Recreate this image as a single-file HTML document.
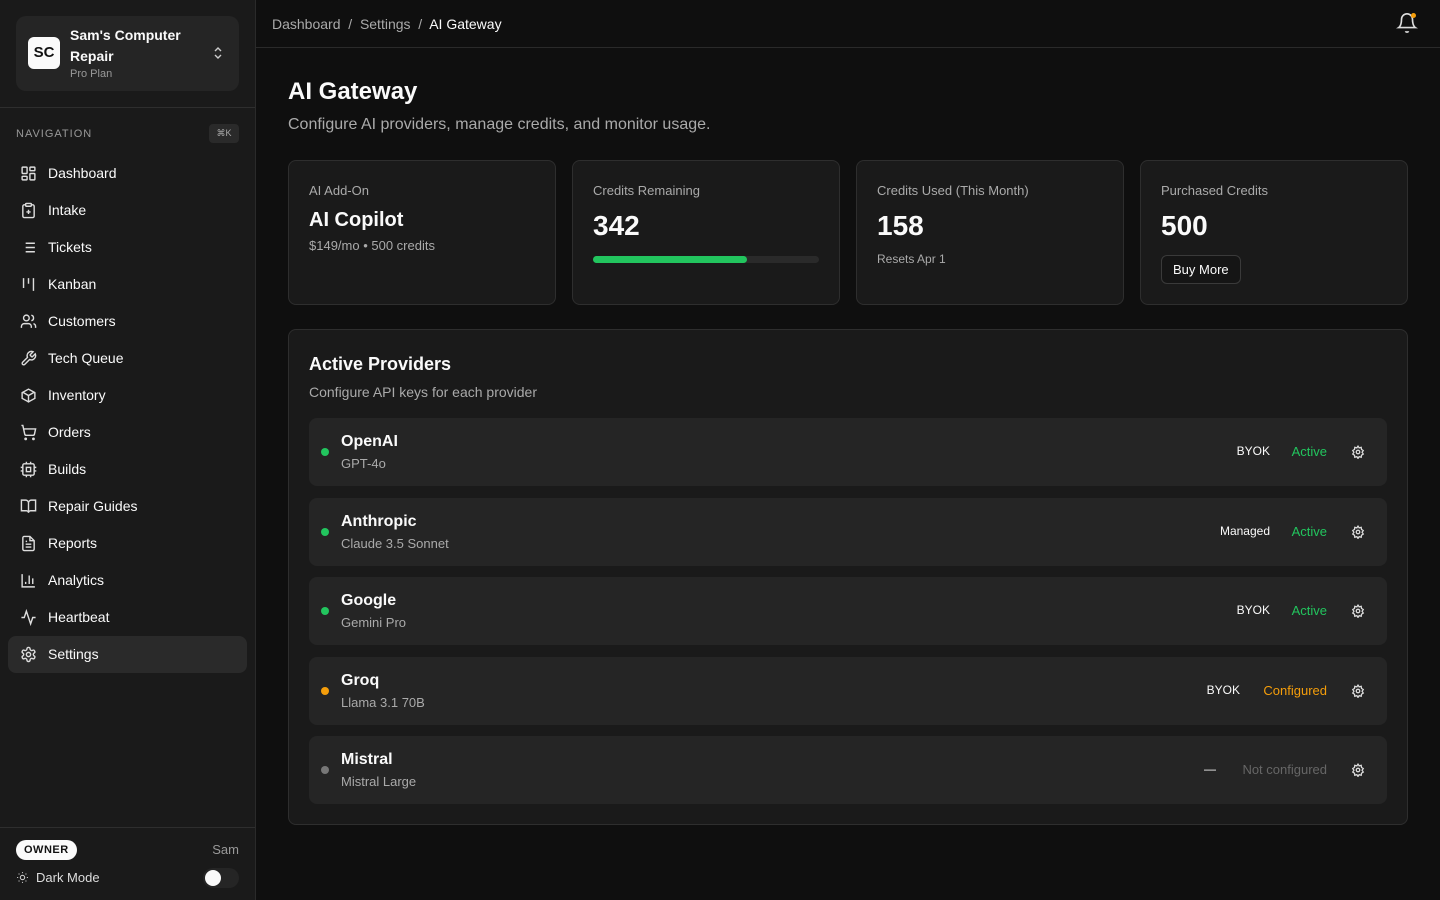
<!DOCTYPE html>
<html><head><meta charset="utf-8"><style>
*{box-sizing:border-box;margin:0;padding:0}
body{width:1440px;height:900px;background:#0f0f0f;font-family:"Liberation Sans",sans-serif;color:#fafafa;position:relative;overflow:hidden}
.sb{position:absolute;left:0;top:0;width:256px;height:900px;background:#1a1a1a;border-right:1px solid #2a2a2a}
.org{position:absolute;left:16px;top:16px;width:223px;height:75px;background:#252525;border-radius:10px}
.av{position:absolute;left:12px;top:21px;width:32px;height:32px;background:#fafafa;border-radius:6px;color:#111;font-weight:bold;font-size:15px;text-align:center;line-height:32px}
.on{position:absolute;left:54px;top:9px;font-size:14px;font-weight:bold;line-height:21px;width:140px}
.pp{position:absolute;left:54px;top:52px;font-size:11px;color:#999}
.sep{position:absolute;left:0;top:107px;width:255px;border-top:1px solid #2e2e2e}
.navl{position:absolute;left:16px;top:128px;font-size:11px;letter-spacing:1px;color:#999}
.kb{position:absolute;left:209px;top:124px;width:30px;height:19px;background:#2a2a2a;border-radius:4px;font-size:9px;color:#aaa;text-align:center;line-height:19px}
.ni{position:absolute;left:8px;width:239px;height:37px;border-radius:8px;font-size:14px;line-height:37px;padding-left:40px}
.ni svg{position:absolute;left:12px;top:10px}
.act{background:#2a2a2a}
.foot{position:absolute;left:0;top:827px;width:255px;border-top:1px solid #2e2e2e}
.own{position:absolute;left:16px;top:840px;background:#fafafa;color:#111;font-size:11px;font-weight:bold;border-radius:10px;padding:4px 8px;letter-spacing:.5px}
.hdr{position:absolute;left:256px;top:0;right:0;height:48px;border-bottom:1px solid #2a2a2a}
.bc{position:absolute;left:16px;top:16px;font-size:14px;color:#aaa}
.card{position:absolute;top:160px;width:268px;height:145px;background:#1a1a1a;border:1px solid #2e2e2e;border-radius:8px}
.cl{position:absolute;left:20px;top:22px;font-size:13px;color:#aaa}
.cv{position:absolute;left:20px;top:49px;font-size:28px;font-weight:bold}
.prov{position:absolute;left:288px;top:329px;width:1120px;height:496px;background:#1a1a1a;border:1px solid #2e2e2e;border-radius:8px}
.row{position:absolute;left:20px;width:1078px;height:68px;background:#252525;border-radius:8px}
.dot{position:absolute;left:12px;top:30px;width:8px;height:8px;border-radius:50%}
.pn{position:absolute;left:32px;top:15px;font-size:16px;font-weight:bold}
.pm{position:absolute;left:32px;top:38px;font-size:13px;color:#aaa}
.ty{position:absolute;top:26px;font-size:12px;text-align:right}
.st{position:absolute;right:60px;top:26px;font-size:13px}
.g{position:absolute;right:22px;top:27px}
</style></head><body>
<div class="sb">
<div class="org"><div class="av">SC</div><div class="on">Sam's Computer Repair</div><div class="pp">Pro Plan</div>
<svg style="position:absolute;left:197px;top:30px" width="10" height="14" viewBox="0 0 10 14" fill="none" stroke="#ccc" stroke-width="1.4"><path d="M2 5l3-3 3 3M2 9l3 3 3-3"/></svg></div>
<div class="sep"></div>
<div class="navl">NAVIGATION</div><div class="kb">⌘K</div>
<div class="ni" style="top:155px"><svg width="17" height="17" viewBox="0 0 24 24" fill="none" stroke="#ddd" stroke-width="2"><rect x="3" y="3" width="7" height="9" rx="1"/><rect x="14" y="3" width="7" height="5" rx="1"/><rect x="14" y="12" width="7" height="9" rx="1"/><rect x="3" y="16" width="7" height="5" rx="1"/></svg>Dashboard</div>
<div class="ni" style="top:192px"><svg width="17" height="17" viewBox="0 0 24 24" fill="none" stroke="#ddd" stroke-width="2"><rect x="8" y="2" width="8" height="4" rx="1"/><path d="M16 4h2a2 2 0 012 2v14a2 2 0 01-2 2H6a2 2 0 01-2-2V6a2 2 0 012-2h2M12 11v6M9 14h6"/></svg>Intake</div>
<div class="ni" style="top:229px"><svg width="17" height="17" viewBox="0 0 24 24" fill="none" stroke="#ddd" stroke-width="2"><path d="M8 6h13M8 12h13M8 18h13M3 6h.01M3 12h.01M3 18h.01"/></svg>Tickets</div>
<div class="ni" style="top:266px"><svg width="17" height="17" viewBox="0 0 24 24" fill="none" stroke="#ddd" stroke-width="2"><path d="M5 3v14M12 3v8M19 3v18"/></svg>Kanban</div>
<div class="ni" style="top:303px"><svg width="17" height="17" viewBox="0 0 24 24" fill="none" stroke="#ddd" stroke-width="2"><circle cx="9" cy="7" r="4"/><path d="M16 21v-2a4 4 0 00-4-4H6a4 4 0 00-4 4v2M16 3.1a4 4 0 010 7.8M22 21v-2a4 4 0 00-3-3.9"/></svg>Customers</div>
<div class="ni" style="top:340px"><svg width="17" height="17" viewBox="0 0 24 24" fill="none" stroke="#ddd" stroke-width="2"><path d="M14.7 6.3a1 1 0 000 1.4l1.6 1.6a1 1 0 001.4 0l3.8-3.8a6 6 0 01-7.9 7.9l-6.9 6.9a2.1 2.1 0 01-3-3l6.9-6.9a6 6 0 017.9-7.9z"/></svg>Tech Queue</div>
<div class="ni" style="top:377px"><svg width="17" height="17" viewBox="0 0 24 24" fill="none" stroke="#ddd" stroke-width="2"><path d="M21 8l-9-5-9 5v8l9 5 9-5zM3.3 7L12 12l8.7-5M12 22V12"/></svg>Inventory</div>
<div class="ni" style="top:414px"><svg width="17" height="17" viewBox="0 0 24 24" fill="none" stroke="#ddd" stroke-width="2"><circle cx="8" cy="21" r="1"/><circle cx="19" cy="21" r="1"/><path d="M2 2h2l2.7 12.4a2 2 0 002 1.6h9.7a2 2 0 002-1.6L22 7H5.1"/></svg>Orders</div>
<div class="ni" style="top:451px"><svg width="17" height="17" viewBox="0 0 24 24" fill="none" stroke="#ddd" stroke-width="2"><rect x="4" y="4" width="16" height="16" rx="2"/><rect x="9" y="9" width="6" height="6"/><path d="M9 1v3M15 1v3M9 20v3M15 20v3M20 9h3M20 14h3M1 9h3M1 14h3"/></svg>Builds</div>
<div class="ni" style="top:488px"><svg width="17" height="17" viewBox="0 0 24 24" fill="none" stroke="#ddd" stroke-width="2"><path d="M2 3h6a4 4 0 014 4v14a3 3 0 00-3-3H2zM22 3h-6a4 4 0 00-4 4v14a3 3 0 013-3h7z"/></svg>Repair Guides</div>
<div class="ni" style="top:525px"><svg width="17" height="17" viewBox="0 0 24 24" fill="none" stroke="#ddd" stroke-width="2"><path d="M14 2H6a2 2 0 00-2 2v16a2 2 0 002 2h12a2 2 0 002-2V8zM14 2v6h6M16 13H8M16 17H8M10 9H8"/></svg>Reports</div>
<div class="ni" style="top:562px"><svg width="17" height="17" viewBox="0 0 24 24" fill="none" stroke="#ddd" stroke-width="2"><path d="M3 3v18h18M18 17V9M13 17V5M8 17v-3"/></svg>Analytics</div>
<div class="ni" style="top:599px"><svg width="17" height="17" viewBox="0 0 24 24" fill="none" stroke="#ddd" stroke-width="2"><path d="M22 12h-4l-3 9L9 3l-3 9H2"/></svg>Heartbeat</div>
<div class="ni act" style="top:636px"><svg width="17" height="17" viewBox="0 0 24 24" fill="none" stroke="#ddd" stroke-width="2"><circle cx="12" cy="12" r="3"/><path d="M12.2 2h-.4a2 2 0 00-2 2v.2a2 2 0 01-1 1.7l-.4.3a2 2 0 01-2 0l-.2-.1a2 2 0 00-2.7.7l-.2.4a2 2 0 00.7 2.7l.2.1a2 2 0 011 1.7v.5a2 2 0 01-1 1.7l-.2.1a2 2 0 00-.7 2.7l.2.4a2 2 0 002.7.7l.2-.1a2 2 0 012 0l.4.3a2 2 0 011 1.7v.2a2 2 0 002 2h.4a2 2 0 002-2v-.2a2 2 0 011-1.7l.4-.3a2 2 0 012 0l.2.1a2 2 0 002.7-.7l.2-.4a2 2 0 00-.7-2.7l-.2-.1a2 2 0 01-1-1.7v-.5a2 2 0 011-1.7l.2-.1a2 2 0 00.7-2.7l-.2-.4a2 2 0 00-2.7-.7l-.2.1a2 2 0 01-2 0l-.4-.3a2 2 0 01-1-1.7V4a2 2 0 00-2-2z"/></svg>Settings</div>
<div class="foot"></div>
<div class="own">OWNER</div>
<div style="position:absolute;right:16px;top:842px;font-size:13px;color:#999">Sam</div>
<svg style="position:absolute;left:16px;top:871px" width="13" height="13" viewBox="0 0 24 24" fill="none" stroke="#ccc" stroke-width="2"><circle cx="12" cy="12" r="4"/><path d="M12 2v2M12 20v2M4.9 4.9l1.4 1.4M17.7 17.7l1.4 1.4M2 12h2M20 12h2M6.3 17.7l-1.4 1.4M19.1 4.9l-1.4 1.4"/></svg>
<div style="position:absolute;left:36px;top:870px;font-size:13px;color:#ddd">Dark Mode</div>
<div style="position:absolute;left:203px;top:868px;width:36px;height:20px;border-radius:10px;background:#252525"><div style="position:absolute;left:2px;top:2px;width:16px;height:16px;border-radius:50%;background:#fafafa"></div></div>
</div>
<div class="hdr"><div class="bc">Dashboard &nbsp;/&nbsp; Settings &nbsp;/&nbsp; <span style="color:#fafafa">AI Gateway</span></div>
<svg style="position:absolute;right:22px;top:12px" width="22" height="22" viewBox="0 0 24 24" fill="none" stroke="#ddd" stroke-width="1.8"><path d="M6 8a6 6 0 0112 0c0 7 3 9 3 9H3s3-2 3-9M10.3 21a1.9 1.9 0 003.4 0"/></svg>
<div style="position:absolute;right:24px;top:13px;width:5px;height:5px;border-radius:50%;background:#f59e0b"></div></div>
<div style="position:absolute;left:288px;top:78px;font-size:24px;font-weight:bold">AI Gateway</div>
<div style="position:absolute;left:288px;top:116px;font-size:16px;color:#aaa">Configure AI providers, manage credits, and monitor usage.</div>
<div class="card" style="left:288px"><div class="cl">AI Add-On</div><div style="position:absolute;left:20px;top:48px;font-size:20px;font-weight:bold">AI Copilot</div><div style="position:absolute;left:20px;top:77px;font-size:13px;color:#aaa">$149/mo • 500 credits</div></div>
<div class="card" style="left:572px"><div class="cl">Credits Remaining</div><div class="cv">342</div><div style="position:absolute;left:20px;top:95px;width:226px;height:7px;border-radius:4px;background:#2a2a2a"><div style="width:154px;height:7px;border-radius:4px;background:#22c55e"></div></div></div>
<div class="card" style="left:856px"><div class="cl">Credits Used (This Month)</div><div class="cv">158</div><div style="position:absolute;left:20px;top:91px;font-size:12px;color:#aaa">Resets Apr 1</div></div>
<div class="card" style="left:1140px"><div class="cl">Purchased Credits</div><div class="cv">500</div><div style="position:absolute;left:20px;top:94px;border:1px solid #3a3a3a;border-radius:6px;padding:6px 11px;font-size:13px;background:#151515">Buy More</div></div>
<div class="prov">
<div style="position:absolute;left:20px;top:24px;font-size:18px;font-weight:bold">Active Providers</div>
<div style="position:absolute;left:20px;top:54px;font-size:14px;color:#aaa">Configure API keys for each provider</div>
<div class="row" style="top:88px"><div class="dot" style="background:#22c55e"></div><div class="pn">OpenAI</div><div class="pm">GPT-4o</div><div class="ty" style="right:117px">BYOK</div><div class="st" style="color:#22c55e">Active</div><svg class="g" width="14" height="14" viewBox="0 0 24 24" fill="none" stroke="#ddd" stroke-width="2.2"><circle cx="12" cy="12" r="3"/><path d="M12 2l2 3 3.5-1 .5 3.5 3 2-2 3 2 3-3 2-.5 3.5-3.5-1-2 3-2-3-3.5 1L6 17.5l-3-2 2-3-2-3 3-2L6.5 4 10 5z"/></svg></div>
<div class="row" style="top:168px"><div class="dot" style="background:#22c55e"></div><div class="pn">Anthropic</div><div class="pm">Claude 3.5 Sonnet</div><div class="ty" style="right:117px">Managed</div><div class="st" style="color:#22c55e">Active</div><svg class="g" width="14" height="14" viewBox="0 0 24 24" fill="none" stroke="#ddd" stroke-width="2.2"><circle cx="12" cy="12" r="3"/><path d="M12 2l2 3 3.5-1 .5 3.5 3 2-2 3 2 3-3 2-.5 3.5-3.5-1-2 3-2-3-3.5 1L6 17.5l-3-2 2-3-2-3 3-2L6.5 4 10 5z"/></svg></div>
<div class="row" style="top:247px"><div class="dot" style="background:#22c55e"></div><div class="pn">Google</div><div class="pm">Gemini Pro</div><div class="ty" style="right:117px">BYOK</div><div class="st" style="color:#22c55e">Active</div><svg class="g" width="14" height="14" viewBox="0 0 24 24" fill="none" stroke="#ddd" stroke-width="2.2"><circle cx="12" cy="12" r="3"/><path d="M12 2l2 3 3.5-1 .5 3.5 3 2-2 3 2 3-3 2-.5 3.5-3.5-1-2 3-2-3-3.5 1L6 17.5l-3-2 2-3-2-3 3-2L6.5 4 10 5z"/></svg></div>
<div class="row" style="top:327px"><div class="dot" style="background:#f59e0b"></div><div class="pn">Groq</div><div class="pm">Llama 3.1 70B</div><div class="ty" style="right:147px">BYOK</div><div class="st" style="color:#f59e0b">Configured</div><svg class="g" width="14" height="14" viewBox="0 0 24 24" fill="none" stroke="#ddd" stroke-width="2.2"><circle cx="12" cy="12" r="3"/><path d="M12 2l2 3 3.5-1 .5 3.5 3 2-2 3 2 3-3 2-.5 3.5-3.5-1-2 3-2-3-3.5 1L6 17.5l-3-2 2-3-2-3 3-2L6.5 4 10 5z"/></svg></div>
<div class="row" style="top:406px"><div class="dot" style="background:#777"></div><div class="pn">Mistral</div><div class="pm">Mistral Large</div><div class="ty" style="right:171px">—</div><div class="st" style="color:#666">Not configured</div><svg class="g" width="14" height="14" viewBox="0 0 24 24" fill="none" stroke="#ddd" stroke-width="2.2"><circle cx="12" cy="12" r="3"/><path d="M12 2l2 3 3.5-1 .5 3.5 3 2-2 3 2 3-3 2-.5 3.5-3.5-1-2 3-2-3-3.5 1L6 17.5l-3-2 2-3-2-3 3-2L6.5 4 10 5z"/></svg></div>
</div>
</body></html>
